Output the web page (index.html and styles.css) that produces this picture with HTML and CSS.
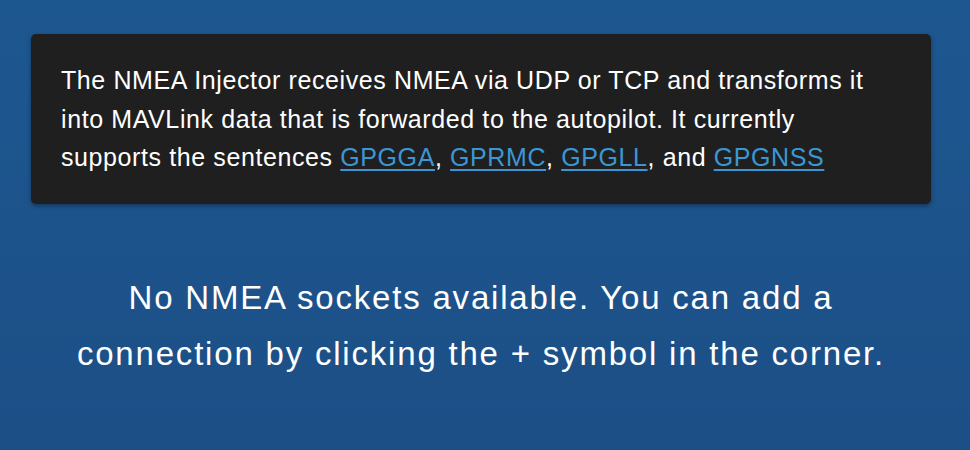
FILE: index.html
```html
<!DOCTYPE html>
<html lang="en">
<head>
<meta charset="utf-8">
<title>NMEA Injector</title>
<link rel="stylesheet" href="styles.css">
</head>
<body>
<main class="page">
  <section class="info-card">
    <p class="info-text">The NMEA Injector receives NMEA via UDP or TCP and transforms it into MAVLink data that is forwarded to the autopilot. It currently supports the sentences <a href="#" class="link">GPGGA</a>, <a href="#" class="link">GPRMC</a>, <a href="#" class="link">GPGLL</a>, and <a href="#" class="link">GPGNSS</a></p>
  </section>
  <p class="empty-msg">No NMEA sockets available. You can add a connection by clicking the + symbol in the corner.</p>
</main>
</body>
</html>
```

FILE: styles.css
```css
html, body {
  margin: 0;
  padding: 0;
  height: 100%;
}

body {
  background: linear-gradient(180deg, #1d5790 0%, #1c4f86 100%);
  font-family: "Liberation Sans", Arial, Helvetica, sans-serif;
  color: #ffffff;
  overflow: hidden;
}

.page {
  width: 900px;
  margin-left: 31px;
  padding-top: 34px;
  display: flex;
  flex-direction: column;
}

.info-card {
  background: #1f1f1f;
  border-radius: 5px;
  box-shadow: 0 2px 4px rgba(0, 0, 0, 0.35);
  padding: 27px 40px 27px 30px;
}

.info-text {
  margin: 0;
  font-size: 25px;
  line-height: 38.5px;
  letter-spacing: 0.6px;
  color: #ffffff;
}

.link {
  color: #3b97d3;
  text-decoration: underline;
  text-decoration-thickness: 2px;
  text-underline-offset: 3px;
}

.empty-msg {
  margin: 66px 0 0 0;
  padding: 0 40px;
  text-align: center;
  font-size: 33px;
  line-height: 56px;
  letter-spacing: 1.8px;
  color: #ffffff;
}
```
